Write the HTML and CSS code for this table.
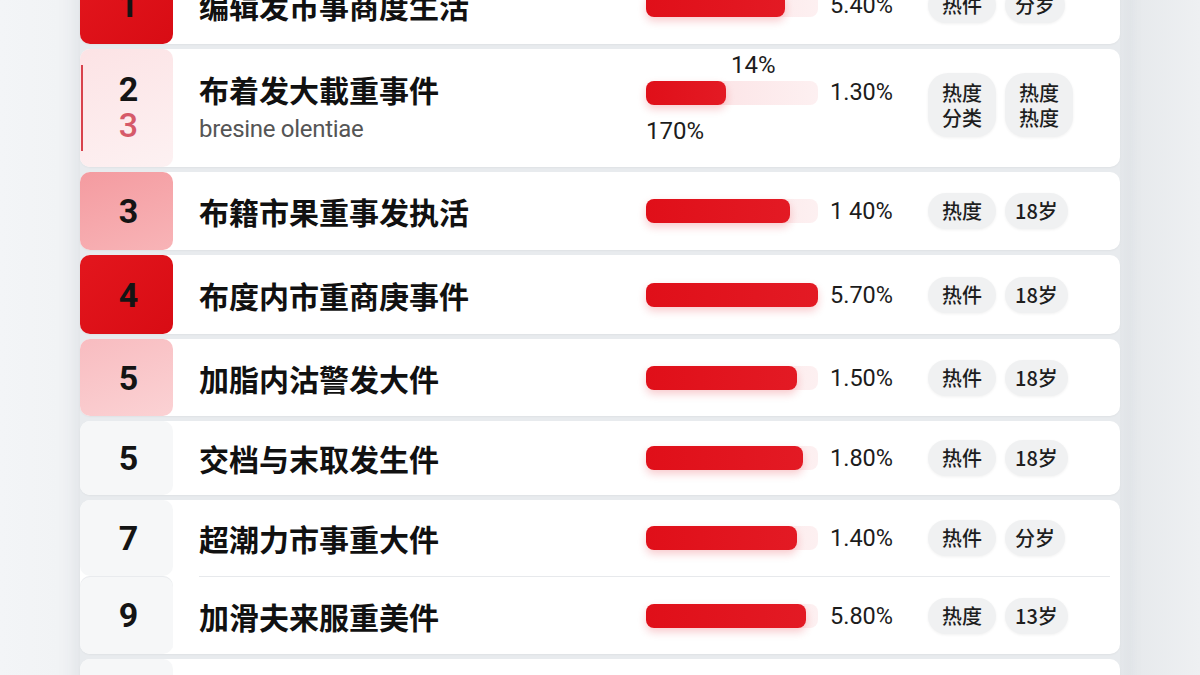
FILE: index.html
```html
<!DOCTYPE html>
<html lang="zh-CN">
<head>
	<meta charset="UTF-8">
	<title>热度榜</title>
	<link rel="stylesheet" href="styles.css">
</head>
<body>
	<div class="panel">
		<div class="list">
			<div class="card">
				<div class="row">
					<div class="rank rank-red">1</div>
					<div class="main">
						<div class="title">编辑发市事商度生活</div>
						<div class="meter"><div class="track"><div class="fill" style="width:139px"></div></div></div>
						<div class="pct">5.40%</div>
						<div class="tags"><span class="tag">热件</span><span class="tag">分岁</span></div>
					</div>
				</div>
			</div>

			<div class="card">
				<div class="row row-tall">
					<div class="rank rank-pale">
						<span>2</span>
						<span class="sub-rank">3</span>
					</div>
					<div class="main">
						<div class="title-block">
							<div class="title">布着发大載重事件</div>
							<div class="subtitle">bresine olentiae</div>
						</div>
						<div class="meter">
							<div class="bar-label bar-label-top">14%</div>
							<div class="track"><div class="fill" style="width:80px"></div></div>
							<div class="bar-label bar-label-bottom">170%</div>
						</div>
						<div class="pct">1.30%</div>
						<div class="tags">
							<span class="tag tag-double">热度<br>分类</span>
							<span class="tag tag-double">热度<br>热度</span>
						</div>
					</div>
				</div>
			</div>

			<div class="card">
				<div class="row">
					<div class="rank rank-rose">3</div>
					<div class="main">
						<div class="title">布籍市果重事发执活</div>
						<div class="meter"><div class="track"><div class="fill" style="width:144px"></div></div></div>
						<div class="pct">1 40%</div>
						<div class="tags"><span class="tag">热度</span><span class="tag">18岁</span></div>
					</div>
				</div>
			</div>

			<div class="card">
				<div class="row row-4">
					<div class="rank rank-red">4</div>
					<div class="main">
						<div class="title">布度内市重商庚事件</div>
						<div class="meter"><div class="track"><div class="fill" style="width:172px"></div></div></div>
						<div class="pct">5.70%</div>
						<div class="tags"><span class="tag">热件</span><span class="tag">18岁</span></div>
					</div>
				</div>
			</div>

			<div class="card">
				<div class="row row-5">
					<div class="rank rank-light">5</div>
					<div class="main">
						<div class="title">加脂内沽警发大件</div>
						<div class="meter"><div class="track"><div class="fill" style="width:151px"></div></div></div>
						<div class="pct">1.50%</div>
						<div class="tags"><span class="tag">热件</span><span class="tag">18岁</span></div>
					</div>
				</div>
			</div>

			<div class="card">
				<div class="row row-6">
					<div class="rank rank-plain">5</div>
					<div class="main">
						<div class="title">交档与末取发生件</div>
						<div class="meter"><div class="track"><div class="fill" style="width:157px"></div></div></div>
						<div class="pct">1.80%</div>
						<div class="tags"><span class="tag">热件</span><span class="tag">18岁</span></div>
					</div>
				</div>
			</div>

			<div class="card">
				<div class="row row-7">
					<div class="rank rank-plain">7</div>
					<div class="main">
						<div class="title">超潮力市事重大件</div>
						<div class="meter"><div class="track"><div class="fill" style="width:151px"></div></div></div>
						<div class="pct">1.40%</div>
						<div class="tags"><span class="tag">热件</span><span class="tag">分岁</span></div>
					</div>
				</div>
				<div class="row">
					<div class="rank rank-plain">9</div>
					<div class="main">
						<div class="title">加滑夫来服重美件</div>
						<div class="meter"><div class="track"><div class="fill" style="width:160px"></div></div></div>
						<div class="pct">5.80%</div>
						<div class="tags"><span class="tag">热度</span><span class="tag">13岁</span></div>
					</div>
				</div>
			</div>

			<div class="card">
				<div class="row">
					<div class="rank rank-plain"></div>
					<div class="main"></div>
				</div>
			</div>
		</div>
	</div>
</body>
</html>
```

FILE: styles.css
```css
*{
	margin: 0;
	padding: 0;
	box-sizing: border-box;
}
body{
	background: linear-gradient(90deg, #f3f5f7 0, #f1f3f5 60px, #f1f3f5 1120px, #e6e9ec 1130px, #eef0f2 1200px);
	font-family: "Noto Sans CJK SC", "Noto Sans", sans-serif;
	color: #111;
	overflow: hidden;
	height: 675px;
}
.panel{
	width: 1040px;
	margin-left: 80px;
	background: #e8ebee;
	box-shadow: 0 0 22px rgba(40, 60, 80, .12);
	min-height: 675px;
}
.list{
	display: flex;
	flex-direction: column;
	gap: 5px;
	margin-top: -34px;
}
.card{
	background: #fff;
	border-radius: 10px;
	box-shadow: 0 1px 2px rgba(0, 0, 0, .04);
}
.row{
	display: flex;
	height: 78px;
}
.row-tall{
	height: 118px;
}
.row-4{
	height: 79px;
}
.row-5{
	height: 77px;
}
.row-6{
	height: 74px;
}
.row-7{
	height: 76px;
}
.row + .row .main{
	border-top: 1px solid #e7e9ec;
}
.row + .row .rank{
	box-shadow: inset 0 1px 0 #e9ebee;
}

/* rank column */
.rank{
	width: 93px;
	flex-shrink: 0;
	margin-right: 26px;
	padding-left: 4px;
	border-radius: 10px;
	display: flex;
	align-items: center;
	justify-content: center;
	font-family: Roboto, "Liberation Sans", sans-serif;
	font-weight: 700;
	font-size: 34px;
	color: #141414;
}
.rank-red{
	background: linear-gradient(135deg, #e3161d, #d80c14);
}
.rank-rose{
	background: linear-gradient(160deg, #f49ba0, #f8b4b7);
}
.rank-light{
	background: linear-gradient(160deg, #f8bcc0, #fbd2d4);
}
.rank-pale{
	flex-direction: column;
	justify-content: flex-start;
	padding-top: 22px;
	line-height: 36px;
	background:
		linear-gradient(#d8424c, #d8424c) no-repeat 1px 16px / 2px 86px,
		linear-gradient(160deg, #fce3e5, #fdf1f2);
}
.sub-rank{
	color: #d65a69;
	font-weight: 500;
}
.rank-plain{
	background: #f6f7f8;
}

/* content */
.main{
	flex: 1;
	margin-right: 10px;
	display: grid;
	grid-template-columns: 447px 172px 110px 1fr;
	align-items: center;
}
.title{
	font-size: 30px;
	font-weight: 700;
	line-height: 36px;
	color: #111;
	white-space: nowrap;
}
.subtitle{
	margin-top: 8px;
	font-family: Roboto, "Noto Sans", sans-serif;
	font-size: 24px;
	line-height: 28px;
	letter-spacing: -0.3px;
	color: #555;
}
.track{
	height: 24px;
	border-radius: 8px;
	background: linear-gradient(90deg, #fbdde0, #fdf0f1);
}
.fill{
	height: 24px;
	border-radius: 8px;
	background: linear-gradient(90deg, #e00f19, #e31a24);
	box-shadow: 0 4px 8px rgba(225, 20, 30, .22);
}
.pct{
	padding-left: 12px;
	font-family: Roboto, "Liberation Sans", sans-serif;
	font-size: 23.5px;
	line-height: 26px;
	color: #1c1c1c;
}
.bar-label{
	font-family: Roboto, "Liberation Sans", sans-serif;
	font-size: 24px;
	line-height: 22px;
	color: #1c1c1c;
}
.bar-label-top{
	margin-left: 85px;
	margin-bottom: 5px;
}
.bar-label-bottom{
	margin-top: 15px;
}
.tags{
	display: flex;
	gap: 9px;
	align-items: center;
}
.tag{
	display: inline-block;
	padding: 5px 14px;
	border-radius: 18px;
	background: #f0f1f2;
	box-shadow: 0 1px 3px rgba(0, 0, 0, .06);
	font-size: 20px;
	font-weight: 500;
	line-height: 26px;
	color: #1e1e1e;
	white-space: nowrap;
}
.tag + .tag{
	padding: 5px 10px;
}
.tag-double, .tag + .tag-double{
	padding: 7px 14px;
	line-height: 25px;
	border-radius: 20px;
}

/* the tall row lines its cells up from the top */
.row-tall .main{
	align-items: start;
}
.row-tall .title-block{
	padding-top: 22px;
}
.row-tall .meter{
	padding-top: 5px;
}
.row-tall .pct{
	padding-top: 30px;
}
.row-tall .tags{
	padding-top: 24px;
}
```
